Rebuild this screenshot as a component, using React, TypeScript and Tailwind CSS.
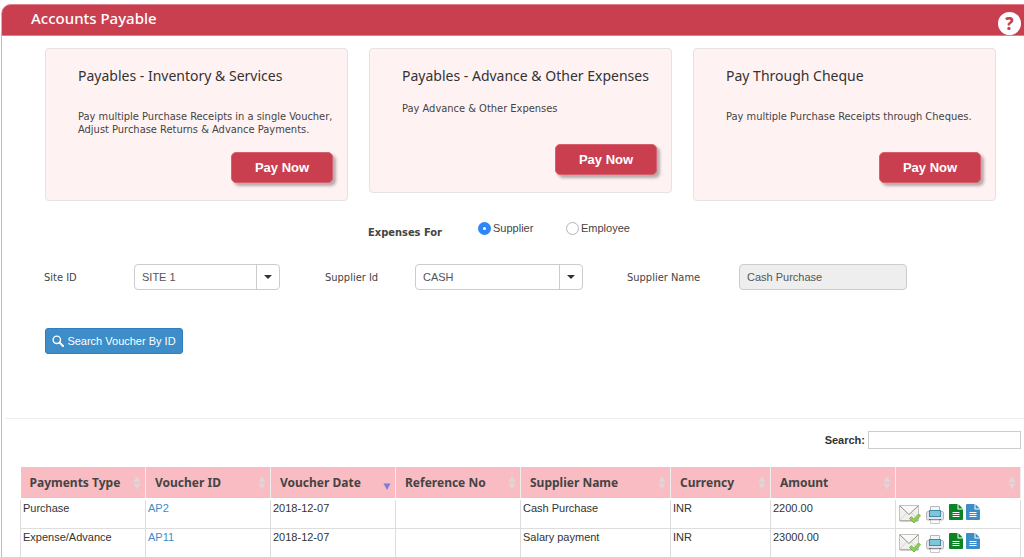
import { useState } from 'react';

const payOptions = [
  {
    title: 'Payables - Inventory & Services',
    text: 'Pay multiple Purchase Receipts in a single Voucher, Adjust Purchase Returns & Advance Payments.',
    compact: false,
  },
  { title: 'Payables - Advance & Other Expenses', text: 'Pay Advance & Other Expenses', compact: true },
  { title: 'Pay Through Cheque', text: 'Pay multiple Purchase Receipts through Cheques.', compact: false },
];

const columns = [
  { label: 'Payments Type', width: 'w-[12.5%]' },
  { label: 'Voucher ID', width: 'w-[12.5%]' },
  { label: 'Voucher Date', width: 'w-[12.5%]', sorted: true },
  { label: 'Reference No', width: 'w-[12.5%]' },
  { label: 'Supplier Name', width: 'w-[15%]' },
  { label: 'Currency', width: 'w-[10%]' },
  { label: 'Amount', width: 'w-[12.5%]' },
  { label: '', width: 'w-[12.5%]' },
];

const vouchers = [
  { type: 'Purchase', id: 'AP2', date: '2018-12-07', ref: '', supplier: 'Cash Purchase', currency: 'INR', amount: '2200.00' },
  { type: 'Expense/Advance', id: 'AP11', date: '2018-12-07', ref: '', supplier: 'Salary payment', currency: 'INR', amount: '23000.00' },
];

function SearchIcon() {
  return (
    <svg viewBox="0 0 12 12" className="size-3" fill="none" stroke="currentColor" aria-hidden="true">
      <circle cx="4.8" cy="4.8" r="3.7" strokeWidth="1.4" />
      <path d="M7.6 7.6 11 11" strokeWidth="2" strokeLinecap="round" />
    </svg>
  );
}

function SortIcon({ sorted }: { sorted?: boolean }) {
  return (
    <svg viewBox="0 0 8 14" className="h-3.5 w-2 shrink-0" aria-hidden="true">
      {sorted ? (
        <path d="M.5 7.5h7L4 14z" fill="#7b7be0" />
      ) : (
        <path d="M4 0 7.5 6h-7zM.5 7.5h7L4 13.5z" fill="#d9d9d9" />
      )}
    </svg>
  );
}

function MailIcon() {
  return (
    <svg viewBox="0 0 22 20" className="h-5 w-[22px]" aria-hidden="true">
      <rect x=".5" y="1.5" width="19" height="15" fill="#f1f0ed" stroke="#c4c2be" />
      <path d="M1 16 7.5 9M19 16l-6.500-7" stroke="#d6d4d0" fill="none" />
      <path d="M1 2l9 8.500L19 2" stroke="#8f8d8a" fill="#faf9f7" />
      <path d="M1 17h18" stroke="#a09e9a" />
      <path d="M10.500 14.500l2-1.800 2.300 2.500 4.700-5.200 2 1.600-6.500 7.400z" fill="#8fd155" stroke="#6aaa38" strokeWidth=".8" />
    </svg>
  );
}

function PrintIcon() {
  return (
    <svg viewBox="0 0 18 18" className="size-[18px]" aria-hidden="true">
      <path d="M4.500.5h9V6h-9z" fill="#f4f5f6" stroke="#b4b8bc" />
      <rect x=".5" y="5.500" width="17" height="8.500" rx="1.500" fill="#e2e4e7" stroke="#b4b8bc" />
      <rect x="3.500" y="4.500" width="11" height="6" fill="#7cc6dc" stroke="#3f8aa6" />
      <path d="M3 13.500h12" stroke="#54585c" />
      <path d="M4.500 14h9v3.500h-9z" fill="#fdfdfd" stroke="#c4c7ca" />
    </svg>
  );
}

function FileIcon({ color }: { color: string }) {
  return (
    <svg viewBox="0 0 14 16" className={`h-4 w-3.5 ${color}`} aria-hidden="true">
      <path d="M1 0h7.500v5.500H14V15a1 1 0 0 1-1 1H1a1 1 0 0 1-1-1V1a1 1 0 0 1 1-1z" fill="currentColor" />
      <path d="M9.500.3 13.700 4.500H9.500z" fill="currentColor" />
      <path d="M3.500 8.500h7M3.500 10.500h7M3.500 12.500h7" stroke="#fff" />
    </svg>
  );
}

function Combo({ id, value, className }: { id: string; value: string; className: string }) {
  return (
    <div className={`relative ${className}`}>
      <select
        id={id}
        defaultValue={value}
        className="h-[26px] w-full appearance-none rounded border border-[#ccc] bg-white pl-[7px] pr-7 font-['Liberation_Sans',Arial,sans-serif] text-[11px] text-[#555]"
      >
        <option>{value}</option>
      </select>
      <span className="pointer-events-none absolute inset-y-px right-px flex w-[23px] items-center justify-center border-l border-[#ccc]">
        <svg viewBox="0 0 8 4" className="h-1 w-2" aria-hidden="true">
          <path d="M0 0h8L4 4z" fill="#333" />
        </svg>
      </span>
    </div>
  );
}

export default function App() {
  const [expensesFor, setExpensesFor] = useState('Supplier');

  return (
    <div className="min-h-screen bg-white pl-px pt-1 font-['DejaVu_Sans_Condensed',Tahoma,sans-serif] text-[11px] text-[#444]">
      <div className="min-h-[calc(100vh-4px)] rounded-tl-[10px] border-l border-[#f0a3b1]">
        <header className="flex h-8 justify-between rounded-tl-[9px] border-y border-[#dc7f8b] bg-[#c93f4f] pl-[29px] pr-[3px]">
          <h1 className="font-['Noto_Sans',Tahoma,sans-serif] text-[15px] font-medium leading-[26px] text-white">Accounts Payable</h1>
          <button
            aria-label="Help"
            className="mt-[7px] flex size-[23px] items-center justify-center rounded-full bg-white font-['Noto_Sans',Tahoma,sans-serif] text-[17px] font-extrabold leading-none text-[#c93f4f]"
          >
            ?
          </button>
        </header>

        <section className="grid grid-cols-3 items-start gap-[21px] pl-[43px] pr-7 pt-3">
          {payOptions.map(o => (
            <div key={o.title} className="rounded border border-[#e6e1e3] bg-[#fff2f2] pb-[17px] pl-8 pr-3.5 pt-4">
              <h2 className="font-['Noto_Sans',Tahoma,sans-serif] text-[14px] leading-[22px] text-[#333]">{o.title}</h2>
              <p className={`min-h-[26px] leading-[13px] ${o.compact ? 'mt-[15px]' : 'mt-[23px]'}`}>{o.text}</p>
              <div className="mt-4 flex justify-end">
                <button className="h-[31px] w-[102px] rounded-[5px] border border-[#d8606e] bg-[#c93f4f] font-['Liberation_Sans',Arial,sans-serif] text-[13px] font-bold text-white shadow-[3px_3px_3px_#b9a9ab]">
                  Pay Now
                </button>
              </div>
            </div>
          ))}
        </section>

        <fieldset className="mt-[15px] flex h-6 pl-[366px]">
          <legend className="float-left w-[110px] pt-2 text-[11px] font-bold leading-[18px]">Expenses For</legend>
          {['Supplier', 'Employee'].map(name => (
            <label key={name} className="flex h-6 w-[88px] items-center gap-0.5 font-['Liberation_Sans',Arial,sans-serif]">
              <input
                type="radio"
                name="expensesFor"
                checked={expensesFor === name}
                onChange={() => setExpensesFor(name)}
                className="size-[13px] appearance-none rounded-full border border-[#b5b5b5] bg-white checked:border-[5px] checked:border-[#2f86f6]"
              />
              {name}
            </label>
          ))}
        </fieldset>

        <div className="mt-6 grid grid-cols-[281fr_302fr_397fr] pl-[42px]">
          <div className="flex items-center">
            <label htmlFor="site" className="w-[90px] pt-0.5">Site ID</label>
            <Combo id="site" value="SITE 1" className="w-[146px]" />
          </div>
          <div className="flex items-center">
            <label htmlFor="supplier" className="w-[90px] pt-0.5">Supplier Id</label>
            <Combo id="supplier" value="CASH" className="w-[168px]" />
          </div>
          <div className="flex items-center">
            <label htmlFor="supplierName" className="w-28 pt-0.5">Supplier Name</label>
            <input
              id="supplierName"
              disabled
              defaultValue="Cash Purchase"
              className="h-[26px] w-[168px] rounded border border-[#ccc] bg-[#eee] px-[7px] font-['Liberation_Sans',Arial,sans-serif] text-[11px] text-[#555]"
            />
          </div>
        </div>

        <button className="ml-[43px] mt-[38px] flex h-[26px] w-[138px] items-center justify-center gap-[3px] rounded-[3px] border border-[#357ebd] bg-[#3c8dc8] font-['Liberation_Sans',Arial,sans-serif] text-[11px] text-white">
          <SearchIcon />
          Search Voucher By ID
        </button>

        <hr className="ml-[3px] mt-16 border-[#eee]" />

        <div className="mt-3 flex items-center justify-end gap-[3px] pr-[3px] font-['Liberation_Sans',Arial,sans-serif]">
          <label htmlFor="search" className="font-bold text-[#333]">Search:</label>
          <input id="search" type="search" className="h-[18px] w-[153px] border border-[#ccc] px-1" />
        </div>

        <div className="mt-[18px] overflow-x-auto pl-[18px] pr-[3px]">
          <table className="w-full table-fixed border-collapse">
            <thead>
              <tr>
                {columns.map(c => (
                  <th key={c.label} className={`h-8 border-b-2 border-r border-b-white border-r-[#eee] bg-[#f9bcc2] py-0 pl-[9px] pr-1 text-left font-['Noto_Sans',Tahoma,sans-serif] text-[12px] font-bold text-[#444] ${c.width}`}>
                    <div className="flex items-center justify-between">
                      <span className="whitespace-nowrap">{c.label}</span>
                      <SortIcon sorted={c.sorted} />
                    </div>
                  </th>
                ))}
              </tr>
            </thead>
            <tbody className="font-['Liberation_Sans',Arial,sans-serif] text-[#333]">
              {vouchers.map(v => (
                <tr key={v.id} className="h-[29px] align-top">
                  <td className="border border-[#ddd] px-0.5">{v.type}</td>
                  <td className="border border-[#ddd] px-0.5">
                    <a href="#" className="text-[#428bca]">{v.id}</a>
                  </td>
                  <td className="border border-[#ddd] px-0.5">{v.date}</td>
                  <td className="border border-[#ddd] px-0.5">{v.ref}</td>
                  <td className="border border-[#ddd] px-0.5">{v.supplier}</td>
                  <td className="border border-[#ddd] px-0.5">{v.currency}</td>
                  <td className="border border-[#ddd] px-0.5">{v.amount}</td>
                  <td className="border border-[#ddd] pl-[3px] pt-1">
                    <div className="flex items-start">
                      <button aria-label="Send mail"><MailIcon /></button>
                      <button aria-label="Print" className="ml-[5px] mt-0.5"><PrintIcon /></button>
                      <button aria-label="Export to Excel" className="ml-[5px]"><FileIcon color="text-[#0b8426]" /></button>
                      <button aria-label="Export to Word" className="ml-[3px]"><FileIcon color="text-[#3c8dc8]" /></button>
                    </div>
                  </td>
                </tr>
              ))}
            </tbody>
          </table>
        </div>
      </div>
    </div>
  );
}
